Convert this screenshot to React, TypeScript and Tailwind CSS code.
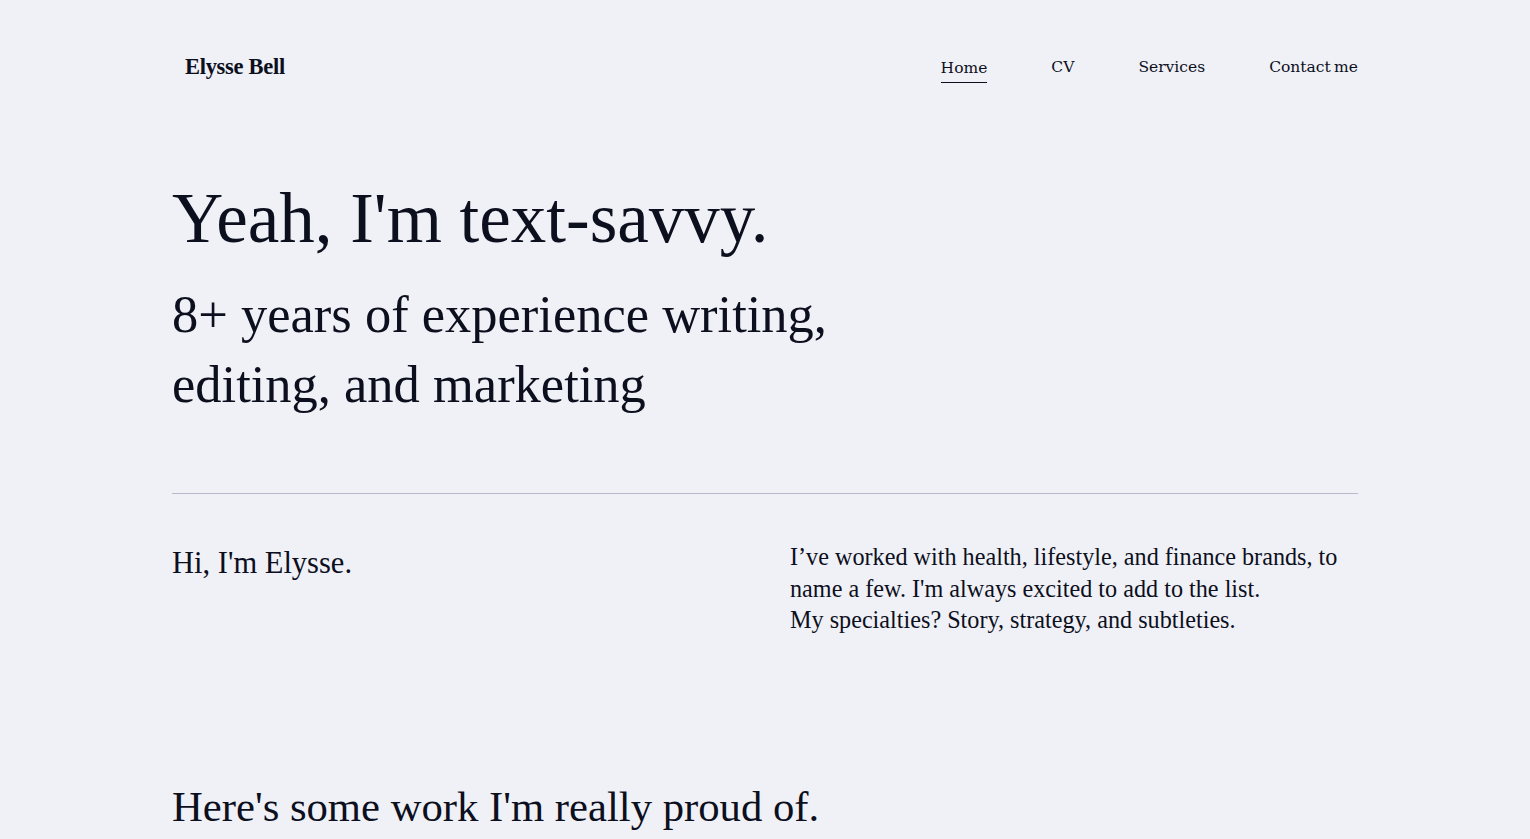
import React from 'react';

const serif = { fontFamily: '"Liberation Serif", "Times New Roman", serif' };

export default function App() {
  return (
    <div className="min-h-screen bg-[#f0f1f6] text-[#0c0f1d]" style={serif}>
      <div className="mx-auto max-w-[1186px]">
        {/* Header */}
        <header className="flex items-center justify-between pt-[50px] h-[84px]">
          <a className="pl-[13px] text-[22.5px] font-bold tracking-[-0.3px]">Elysse Bell</a>
          <nav className="flex items-center gap-[64px] text-[15.5px] font-['DejaVu_Serif',serif] mt-[2px]">
            <a className="border-b border-[#0c0f1d] pb-[2px] mt-[4px]">Home</a>
            <a>CV</a>
            <a>Services</a>
            <a className="[word-spacing:-1.5px]">Contact me</a>
          </nav>
        </header>

        {/* Hero */}
        <section className="pt-[94px] pb-[74px] border-b border-[#b9b9cc]">
          <h1 className="text-[71px] leading-[80px]">Yeah, I'm text-savvy.</h1>
          <h2 className="mt-[21px] text-[52.5px] leading-[70px] max-w-[700px]">
            8+ years of experience writing, editing, and marketing
          </h2>
        </section>

        {/* About */}
        <section className="grid grid-cols-2 gap-[50px] pt-[47px]">
          <p className="text-[30.5px] leading-[44px] pt-[0px]">Hi, I'm Elysse.</p>
          <p className="text-[24.2px] leading-[31.5px]">
            I’ve worked with health, lifestyle, and finance brands, to name a few. I'm always excited to add to the list.
            <br />
            My specialties? Story, strategy, and subtleties.
          </p>
        </section>

        {/* Work */}
        <section className="pt-[141px]">
          <h2 className="text-[42.7px] leading-[60px]">Here's some work I'm really proud of.</h2>
        </section>
      </div>
    </div>
  );
}
